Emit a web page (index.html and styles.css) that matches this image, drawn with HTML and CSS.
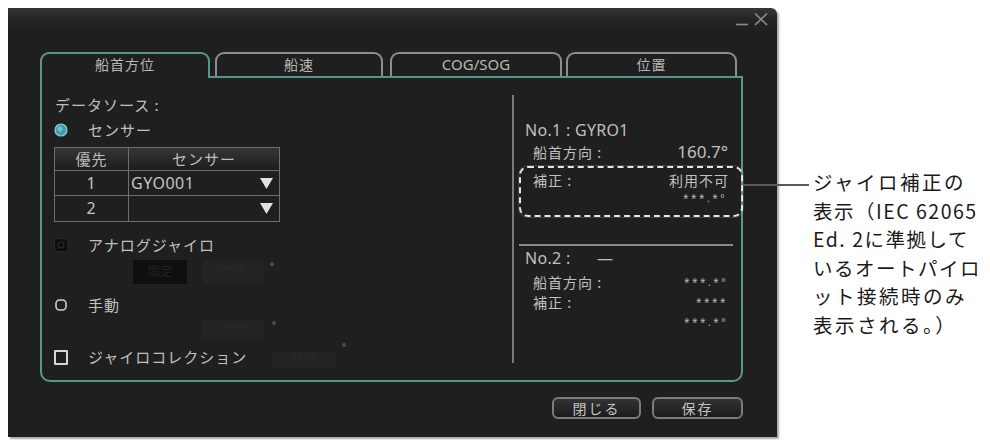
FILE: index.html
```html
<!DOCTYPE html>
<html lang="ja">
<head>
<meta charset="utf-8">
<title>船首方位</title>
<link rel="stylesheet" href="styles.css">
</head>
<body>
<div class="page">
  <div class="dialog">
    <div class="titlebar">
      <svg class="winctl" width="32" height="13" viewBox="0 0 32 13">
        <line x1="0" y1="11.5" x2="12" y2="11.5" />
        <line x1="19" y1="0.5" x2="31" y2="12" />
        <line x1="31" y1="0.5" x2="19" y2="12" />
      </svg>
    </div>
    <div class="tabwrap">
      <div class="tabs">
        <div class="tab active t1">船首方位</div>
        <div class="tab t2">船速</div>
        <div class="tab t3">COG/SOG</div>
        <div class="tab t4">位置</div>
      </div>
      <div class="panel">
        <div class="leftcol">
          <div class="row lbl">データソース :</div>
          <div class="row opt r-sensor">
            <span class="ico"><svg width="14" height="14" viewBox="0 0 14 14"><circle cx="7" cy="7" r="6" class="rad-on" /><circle cx="6" cy="6" r="2.5" class="rad-hi" /></svg></span>
            <span>センサー</span>
          </div>
          <div class="tbl">
            <div class="th">優先</div>
            <div class="th">センサー</div>
            <div class="td num">1</div>
            <div class="td sel"><span>GYO001</span><svg width="13" height="11" viewBox="0 0 13 11"><polygon points="0,0 13,0 6.5,11" /></svg></div>
            <div class="td num">2</div>
            <div class="td sel"><span></span><svg width="13" height="11" viewBox="0 0 13 11"><polygon points="0,0 13,0 6.5,11" /></svg></div>
          </div>
          <div class="row opt r-analog">
            <span class="ico"><svg width="14" height="14" viewBox="0 0 14 14"><rect x="0.5" y="0.5" width="13" height="13" rx="3" class="rad-dis" /><circle cx="7" cy="7" r="3" class="rad-dis-in" /></svg></span>
            <span>アナログジャイロ</span>
          </div>
          <div class="boxrow b-analog">
            <span class="dbox dark w54">固定</span>
            <span class="dbox dim w60">***.*</span>
            <span class="deg">°</span>
          </div>
          <div class="row opt r-manual">
            <span class="ico"><svg width="14" height="14" viewBox="0 0 14 14"><rect x="2" y="2" width="10" height="10" rx="3.5" class="rad-off" /></svg></span>
            <span>手動</span>
          </div>
          <div class="boxrow b-manual">
            <span class="dbox dim w62">***.*</span>
            <span class="deg">°</span>
          </div>
          <div class="row opt r-check">
            <span class="ico"><span class="chk"></span></span>
            <span class="chktext">ジャイロコレクション</span>
            <span class="dbox dim w63 small">***.*</span>
            <span class="deg">°</span>
          </div>
        </div>
        <div class="rightcol">
          <div class="rrow head first">No.1 : GYRO1</div>
          <div class="rrow item"><span>船首方向 :</span><span class="val big">160.7°</span></div>
          <div class="hilite">
            <div class="rrow hitem"><span>補正 :</span><span class="val">利用不可</span></div>
            <div class="rrow hsub"><span class="stars">***.*°</span></div>
          </div>
          <div class="hline"></div>
          <div class="rrow head n2">No.2 : <span class="dash">—</span></div>
          <div class="rrow item i2"><span>船首方向 :</span><span class="stars">***.*°</span></div>
          <div class="rrow item"><span>補正 :</span><span class="stars">****</span></div>
          <div class="rrow item"><span></span><span class="stars">***.*°</span></div>
        </div>
      </div>
    </div>
    <div class="buttons">
      <button class="btn b-close">閉じる</button>
      <button class="btn b-save">保存</button>
    </div>
  </div>
  <div class="callout">
    <div class="leader"></div>
    <div class="note">
      <div class="nl">ジャイロ補正の</div>
      <div class="nl">表示（IEC 62065</div>
      <div class="nl">Ed. 2に準拠して</div>
      <div class="nl tight">いるオートパイロ</div>
      <div class="nl">ット接続時のみ</div>
      <div class="nl">表示される。）</div>
    </div>
  </div>
</div>
</body>
</html>
```
FILE: styles.css
```css
* { box-sizing: border-box; }
html, body { margin: 0; padding: 0; background: #ffffff; }
body { width: 990px; height: 440px; overflow: hidden; }

.page {
  display: flex;
  align-items: flex-start;
  padding: 8px 0 0 8px;
}

.dialog {
  width: 769px;
  height: 429px;
  flex: none;
  background: linear-gradient(#363636 0px, #262626 10px, #1f1f1f 22px, #1f1f1f 100%);
  border-top-right-radius: 6px;
  box-shadow: 2px 2px 2px rgba(0,0,0,0.35);
  font-family: "Noto Sans", "Noto Sans CJK JP", sans-serif;
  color: #c0c0c0;
  display: flex;
  flex-direction: column;
}

.titlebar {
  height: 24px;
  display: flex;
  justify-content: flex-end;
  padding: 5px 9px 0 0;
}
.winctl line { stroke: #8c8c8c; stroke-width: 1.6; }

.tabwrap {
  margin: 20px 0 0 32px;
  width: 703px;
}

.tabs {
  display: flex;
  height: 24px;
  align-items: flex-start;
}
.tab {
  height: 24px;
  border: 2px solid #8e8e8e;
  border-bottom: none;
  border-radius: 9px 9px 0 0;
  text-align: center;
  font-family: "Noto Sans CJK JP", sans-serif;
  font-size: 14px;
  line-height: 20px;
  letter-spacing: 1px;
  color: #b8b8b8;
  flex: none;
}
.tab.active {
  height: 26px;
  border-color: #5a9590;
  background: #1f1f1f;
  position: relative;
  z-index: 1;
}
.t1 { width: 170px; }
.t2 { width: 168px; margin-left: 5px; }
.t3 { width: 172px; margin-left: 7px; font-family: "Noto Sans", sans-serif; font-size: 15px; letter-spacing: 0; }
.t4 { width: 171px; margin-left: 4px; }

.panel {
  height: 306px;
  border: 2px solid #5a9590;
  border-radius: 0 0 10px 10px;
  display: flex;
}

/* left column */
.leftcol {
  width: 470px;
  flex: none;
  padding: 17px 0 0 12px;
  display: flex;
  flex-direction: column;
  font-family: "Noto Sans CJK JP", sans-serif;
  font-size: 15px;
  letter-spacing: 1px;
}
.row { height: 20px; line-height: 20px; display: flex; align-items: center; }
.lbl { padding-left: 1px; }
.ico { width: 34px; flex: none; display: flex; align-items: center; }
.r-sensor { margin-top: 5px; }
.r-analog { margin-top: 13px; }
.r-manual { margin-top: 11px; }
.r-check { margin-top: 8px; }

.rad-on { fill: #3f9eab; stroke: #8fd0d8; stroke-width: 1.2; }
.rad-hi { fill: #7fd3dd; opacity: 0.7; }
.rad-dis { fill: #0d0d0d; stroke: #262626; }
.rad-dis-in { fill: none; stroke: #2c2c2c; stroke-width: 1.2; }
.rad-off { fill: none; stroke: #cfcfcf; stroke-width: 1.6; }

.chk {
  width: 14px;
  height: 15px;
  border: 2px solid #d6d6d6;
  border-radius: 1px;
  display: block;
}
.chktext { width: 184px; flex: none; }

.tbl {
  margin-top: 7px;
  width: 226px;
  display: grid;
  grid-template-columns: 74px 1fr;
  grid-template-rows: 23px 25px 25px;
  border: 1px solid #6e6e6e;
}
.th {
  background: linear-gradient(#363636, #1c1c1c);
  text-align: center;
  line-height: 22px;
  border-bottom: 1px solid #6e6e6e;
  color: #bdbdbd;
}
.th:first-child, .td.num { border-right: 1px solid #6e6e6e; }
.td { line-height: 24px; color: #c4c4c4; }
.tbl .td:nth-child(3), .tbl .td:nth-child(4) { border-bottom: 1px solid #6e6e6e; }
.td.num { text-align: center; font-family: "Noto Sans", sans-serif; font-size: 16px; }
.td.sel {
  display: flex;
  justify-content: space-between;
  align-items: center;
  padding: 0 6px 0 2px;
  font-family: "Noto Sans", sans-serif;
  font-size: 16px;
  letter-spacing: 0.5px;
}
.td.sel polygon { fill: #e2e2e2; }

.boxrow { display: flex; align-items: flex-start; }
.b-analog { margin-top: 5px; height: 24px; padding-left: 79px; }
.b-manual { margin-top: 4px; height: 20px; padding-left: 149px; }
.dbox {
  display: block;
  flex: none;
  height: 100%;
  font-size: 12px;
  line-height: 22px;
  text-align: center;
  letter-spacing: 0;
}
.dbox.dark { background: #0f0f0f; color: #232323; }
.dbox.dim { background: #232323; color: #2b2b2b; }
.w54 { width: 54px; }
.w60 { width: 60px; margin-left: 16px; }
.w62 { width: 62px; }
.w63 { width: 63px; height: 16px; line-height: 16px; margin-top: 6px; }
.deg { font-size: 11px; line-height: 12px; margin-left: 7px; color: #9a9a9a; align-self: flex-start; }
.r-check .deg { margin-top: -6px; }

/* right column */
.rightcol {
  flex: 1;
  margin: 17px 0 17px 0;
  border-left: 2px solid #7a7a7a;
  display: flex;
  flex-direction: column;
  font-size: 14px;
}
.rrow {
  height: 20px;
  line-height: 20px;
  display: flex;
  justify-content: space-between;
  align-items: center;
  font-family: "Noto Sans CJK JP", sans-serif;
  letter-spacing: 1px;
}
.head {
  padding-left: 11px;
  justify-content: flex-start;
  font-family: "Noto Sans", "Noto Sans CJK JP", sans-serif;
  font-size: 16px;
  letter-spacing: 0.3px;
  white-space: pre;
}
.first { margin-top: 25px; }
.item { padding: 0 13px 0 19px; margin-top: 2px; }
.i2 { margin-top: 4px; }
.item + .item { margin-top: 0; }
.val { font-family: "Noto Sans", "Noto Sans CJK JP", sans-serif; }
.big { font-size: 17px; letter-spacing: 0; }
.stars { font-family: "Noto Sans", sans-serif; font-size: 10px; letter-spacing: 2.5px; color: #b8b8b8; }

.hilite {
  margin: 4px -2px 0 5px;
  height: 51px;
  border: 2px dashed #e6e6e6;
  border-radius: 9px;
  padding: 2px 12px 0 12px;
  box-shadow: 0 0 0 1px rgba(255,255,255,0.15);
}
.hsub { height: 16px; justify-content: flex-end; padding-right: 2px; }
.hitem .val { font-family: "Noto Sans CJK JP", sans-serif; }

.hline {
  margin: 27px 8px 0 5px;
  height: 2px;
  background: #8a8a8a;
  flex: none;
}
.n2 { margin-top: 2px; }
.dash { margin-left: 22px; }

/* buttons */
.buttons {
  margin-top: 15px;
  display: flex;
  justify-content: flex-end;
  padding-right: 34px;
  gap: 11px;
}
.btn {
  height: 22px;
  border: 2px solid #7c7c7c;
  border-radius: 6px;
  background: linear-gradient(#333333, #1b1b1b);
  color: #c4c4c4;
  font-family: "Noto Sans CJK JP", sans-serif;
  font-size: 14px;
  letter-spacing: 2px;
  line-height: 16px;
  padding: 0;
}
.b-close { width: 89px; }
.b-save { width: 91px; }

/* annotation */
.callout {
  display: flex;
  align-items: flex-start;
}
.leader {
  width: 66px;
  height: 2px;
  margin: 176px 0 0 -34px;
  background: #5a5a5a;
  position: relative;
  z-index: 2;
  flex: none;
}
.note {
  margin: 160px 0 0 4px;
  font-family: "Noto Sans CJK JP", sans-serif;
  font-size: 19.5px;
  letter-spacing: 2.5px;
  color: #1a1a1a;
  white-space: nowrap;
  display: flex;
  flex-direction: column;
}
.nl {
  height: 28.6px;
  line-height: 28px;
  overflow: visible;
}
.nl:nth-child(2), .nl:nth-child(3) { letter-spacing: 1.5px; }
.nl.tight { letter-spacing: 1.5px; }
```
